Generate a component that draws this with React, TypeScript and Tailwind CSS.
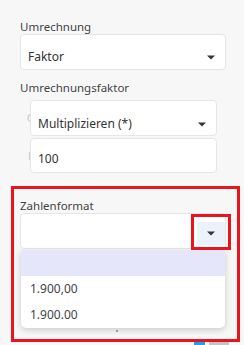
import React, { FC } from "react";

const Caret: FC = () => (
    <svg width="8" height="5" viewBox="0 0 8 5" className="shrink-0">
        <path d="M0 0.5 L8 0.5 L4 4.5 Z" fill="#333" />
    </svg>
);

const Box: FC<{ children?: React.ReactNode; className?: string }> = ({ children, className }) => (
    <div
        className={
            "flex items-center bg-white border border-[#e6e6e6] rounded-[4px] text-[12px] text-[#333] " +
            (className ?? "")
        }
    >
        {children}
    </div>
);

export default function App() {
    return (
        <div
            className="relative w-[244px] h-[345px] overflow-hidden bg-[#f7f7f7]"
            style={{ fontFamily: '"Noto Sans", "Open Sans", sans-serif' }}
        >
            <div className="flex flex-col pl-[20px] pr-[18px] pt-[19px]">
                <p className="relative z-10 text-[11.5px] leading-[16px] h-[15px] text-[#444]">Umrechnung</p>
                <Box className="h-[36px] pt-[10px] pl-[7px] pr-[10px] justify-between">
                    <span>Faktor</span>
                    <Caret />
                </Box>
                <p className="text-[11.5px] leading-[16px] h-[16px] text-[#444] mt-[10px]">Umrechnungsfaktor</p>

                <div className="flex items-center mt-[4px]">
                    <span className="w-[14px] text-[11.5px] text-[#c8c8c8] text-right">C</span>
                    <Box className="relative z-10 -ml-[4px] w-[187px] h-[36px] pt-[12px] pl-[7px] pr-[10px] justify-between">
                        <span>Multiplizieren (*)</span>
                        <Caret />
                    </Box>
                </div>
                <div className="flex items-center mt-[2px]">
                    <span className="w-[14px] text-[11.5px] text-[#c8c8c8] text-right">F</span>
                    <Box className="relative z-10 -ml-[4px] w-[187px] h-[35px] pt-[7px] pl-[7px]">
                        <span>100</span>
                    </Box>
                </div>

                <p className="text-[11.5px] leading-[16px] h-[16px] text-[#444] mt-[25px]">Zahlenformat</p>
                <Box className="h-[36px] -mt-[1px] items-start justify-end">
                    <div className="w-[28px] h-[23px] mt-[8px] bg-[#eaf3fb] flex items-center justify-center">
                        <Caret />
                    </div>
                </Box>
            </div>

            {/* dropdown list */}
            <div className="absolute left-[21px] top-[250px] w-[204px] bg-white rounded-b-[5px] shadow-[0_2px_6px_rgba(0,0,0,0.18)] text-[12px] text-[#444]">
                <div className="h-[26px] bg-[#e6e6fa]" />
                <div className="h-[26px] flex items-center pl-[9px]">1.900,00</div>
                <div className="h-[26px] flex items-center pl-[9px]">1.900.00</div>
            </div>
            <div className="absolute left-[116px] top-[330px] w-[2px] h-[2px] bg-[#999]" />

            {/* partially hidden element at bottom */}
            <div className="absolute left-[194px] top-[341px] w-[11px] h-[6px] bg-[#1ea0f0]" />
            <div className="absolute left-[209px] top-[342px] w-[20px] h-[3px] bg-[#c4c4c4]" />

            {/* annotations */}
            <div className="absolute left-[11px] top-[186px] w-[229px] h-[156px] border-[3px] border-[#e8141e]" />
            <div className="absolute left-[191px] top-[214px] w-[40px] h-[36px] border-[3px] border-[#e8141e]" />
        </div>
    );
}
